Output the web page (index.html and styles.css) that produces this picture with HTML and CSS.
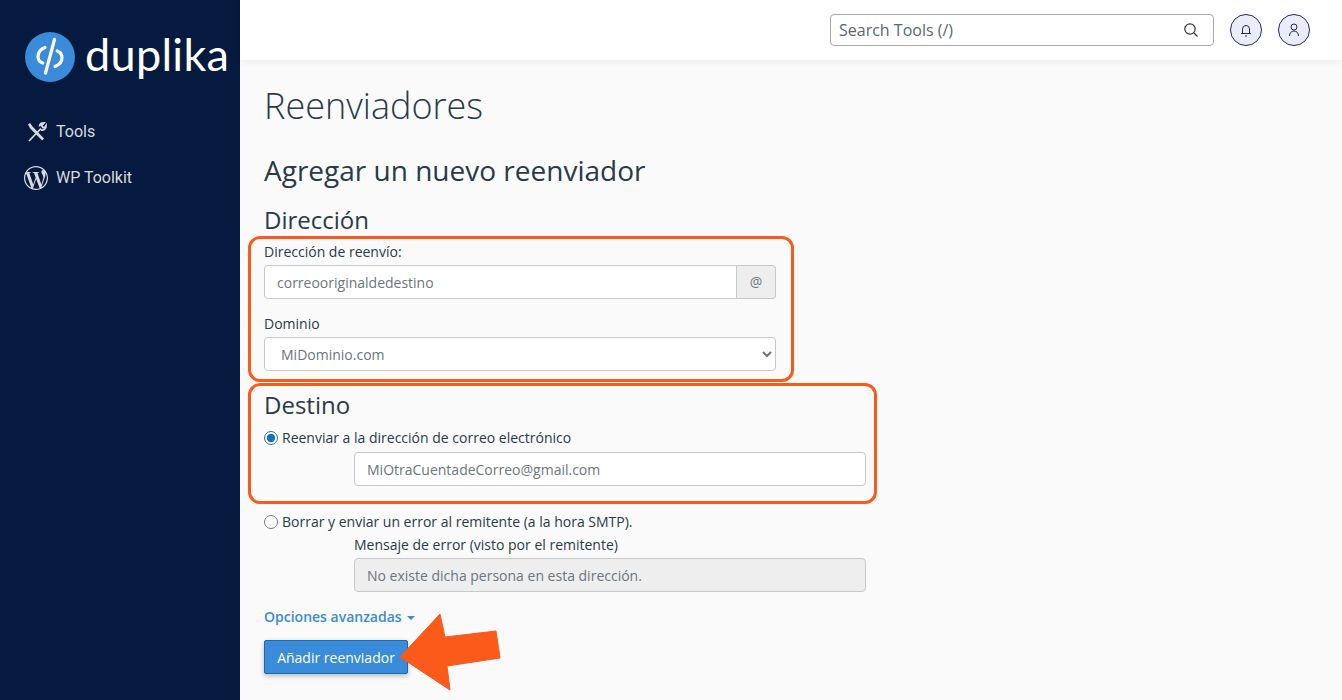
FILE: index.html
```html
<!DOCTYPE html>
<html lang="es">
<head>
    <meta charset="UTF-8">
    <meta name="viewport" content="width=device-width, initial-scale=1.0">
    <title>Reenviadores - duplika</title>
    <link rel="stylesheet" href="styles.css">
</head>
<body>

<div class="layout">
    <!-- Sidebar -->
    <aside class="sidebar">
        <div class="brand">
            <svg class="brand-mark" width="50" height="50" viewBox="0 0 50 50">
                <circle cx="25" cy="25" r="25" fill="#3a8bd9"/>
                <path d="M20 15.5c-4.5 1.8-7 5.2-7 9 0 3.2 1.8 5.6 4.8 6.6M30 34.5c4.500-1.800 7-5.200 7-9 0-3.200-1.800-5.600-4.800-6.600" fill="none" stroke="#fff" stroke-width="3.200" stroke-linecap="round"/>
                <path d="M29.500 7.500 20.500 41" fill="none" stroke="#fff" stroke-width="3.200" stroke-linecap="round"/>
            </svg>
            <span class="brand-name">duplika</span>
        </div>
        <nav class="side-nav">
            <a class="side-link" href="#">
                <svg class="side-icon" width="24" height="24" viewBox="0 0 24 24" fill="none" stroke="#d8dade" stroke-width="1.800">
                    <path d="M5 21 17 8.500M15.500 6.500c.2-2 2-3.600 4.500-3.500l-2.300 2.500 1 1.800 2.300.2 1-1.800c.3 2.700-2.300 5-5 4.300"/>
                    <path d="M4 4.500 6 3l2.500 3.500 11.500 12-1.800 2-12-12L4 4.500Z" fill="#d8dade" stroke="none"/>
                </svg>
                <span>Tools</span>
            </a>
            <a class="side-link" href="#">
                <svg class="side-icon" width="24" height="24" viewBox="0 0 24 24" fill="#d8dade">
                    <path d="M21.469 6.825c.84 1.537 1.318 3.3 1.318 5.175 0 3.979-2.156 7.456-5.363 9.325l3.295-9.527c.615-1.54.82-2.771.82-3.864 0-.405-.026-.78-.07-1.11m-7.981.105c.647-.03 1.232-.105 1.232-.105.582-.075.514-.93-.067-.899 0 0-1.755.135-2.88.135-1.064 0-2.85-.15-2.85-.15-.585-.03-.661.855-.075.885 0 0 .54.061 1.125.09l1.68 4.605-2.37 7.08L5.354 6.9c.649-.03 1.234-.1 1.234-.1.585-.075.516-.93-.065-.896 0 0-1.746.138-2.874.138-.2 0-.438-.008-.69-.015C4.911 3.15 8.235 1.215 12 1.215c2.809 0 5.365 1.072 7.286 2.833-.046-.003-.091-.009-.141-.009-1.06 0-1.812.923-1.812 1.914 0 .89.513 1.643 1.06 2.531.411.72.89 1.643.89 2.977 0 .915-.354 1.994-.821 3.479l-1.075 3.585-3.9-11.61.001.014zM12 22.784c-1.059 0-2.081-.153-3.048-.437l3.237-9.406 3.315 9.087c.024.053.05.101.078.149-1.12.393-2.325.609-3.582.609M1.211 12c0-1.564.336-3.05.935-4.39L7.29 21.709C3.694 19.96 1.212 16.271 1.211 12M12 0C5.385 0 0 5.385 0 12s5.385 12 12 12 12-5.385 12-12S18.615 0 12 0"/>
                </svg>
                <span>WP Toolkit</span>
            </a>
        </nav>
    </aside>

    <div class="page">
        <!-- Top bar -->
        <header class="topbar">
            <div class="search">
                <span class="search-text">Search Tools (/)</span>
                <svg width="16" height="16" viewBox="0 0 16 16" fill="none" stroke="#333" stroke-width="1.200">
                    <circle cx="7" cy="7" r="5.200"/>
                    <path d="m11 11 3.500 3.500"/>
                </svg>
            </div>
            <button class="round-btn" type="button" aria-label="Notificaciones">
                <svg width="16" height="16" viewBox="0 0 16 16" fill="none" stroke="#1c2d4f" stroke-width="1">
                    <path d="M3 11.500h10M4.500 11.500V7a3.500 3.500 0 0 1 7 0v4.500"/>
                    <path d="M7 14h2"/>
                </svg>
            </button>
            <button class="round-btn" type="button" aria-label="Usuario">
                <svg width="16" height="16" viewBox="0 0 16 16" fill="none" stroke="#1c2d4f" stroke-width="1">
                    <circle cx="8" cy="5" r="3"/>
                    <path d="M3.500 14c0-3 1.800-5 4.500-5s4.500 2 4.500 5"/>
                </svg>
            </button>
        </header>

        <!-- Contenido -->
        <main class="content">
            <h1>Reenviadores</h1>
            <h2>Agregar un nuevo reenviador</h2>

            <form class="forward-form">
                <h3 class="title-address">Dirección</h3>
                <label class="field-label" for="fwdAddress">Dirección de reenvío:</label>
                <div class="input-group">
                    <input class="text-input" type="text" id="fwdAddress" value="correooriginaldedestino">
                    <span class="input-addon">@</span>
                </div>
                <label class="field-label domain-label" for="fwdDomain">Dominio</label>
                <select class="text-input domain-select" id="fwdDomain">
                    <option>MiDominio.com</option>
                </select>

                <h3 class="title-dest">Destino</h3>
                <label class="radio-row">
                    <input type="radio" name="dest" checked>
                    <span>Reenviar a la dirección de correo electrónico</span>
                </label>
                <div class="indented first-indent">
                    <input class="text-input" type="text" value="MiOtraCuentadeCorreo@gmail.com">
                </div>

                <label class="radio-row second-radio">
                    <input type="radio" name="dest">
                    <span>Borrar y enviar un error al remitente (a la hora SMTP).</span>
                </label>
                <div class="indented">
                    <label class="field-label" for="errMsg">Mensaje de error (visto por el remitente)</label>
                    <input class="text-input is-disabled" type="text" id="errMsg" value="No existe dicha persona en esta dirección." disabled>
                </div>

                <a class="advanced-link" href="#">Opciones avanzadas <span class="caret"></span></a>
                <button class="submit-btn" type="button">Añadir reenviador</button>

                <!-- Anotaciones encima del formulario -->
                <div class="mark mark-address"></div>
                <div class="mark mark-dest"></div>
                <svg class="mark-arrow" width="104" height="78" viewBox="0 0 104 78">
                    <path d="M1 44 41 1l5 23 51-6 4 27-53 8 3 24Z" fill="#fb5a1a" stroke="#fb5a1a" stroke-width="1" stroke-linejoin="round"/>
                </svg>
            </form>
        </main>
    </div>
</div>

</body>
</html>
```

FILE: styles.css
```css
* {
    box-sizing: border-box;
}
html, body {
    margin: 0;
    height: 100%;
}
body {
    font-family: "Open Sans", sans-serif;
    font-size: 14px;
    line-height: 20px;
    color: #293a4a;
    background-color: #fafafa;
    overflow: hidden;
}
.layout {
    display: flex;
    height: 700px;
}

/* sidebar */
.sidebar {
    width: 240px;
    flex-shrink: 0;
    background-color: #051a3e;
}
.brand {
    display: flex;
    align-items: center;
    gap: 10px;
    padding: 32px 0 0 25px;
    height: 82px;
}
.brand-mark {
    flex-shrink: 0;
}
.brand-name {
    font-family: "Lato", sans-serif;
    font-size: 45px;
    line-height: 50px;
    font-weight: 400;
    color: #fff;
    letter-spacing: 0.3px;
    position: relative;
    top: -3px;
}
.side-nav {
    padding-top: 27px;
}
.side-link {
    display: flex;
    align-items: center;
    gap: 8px;
    height: 46px;
    padding-left: 24px;
    font-family: "Roboto", sans-serif;
    font-size: 16px;
    color: #d8dade;
    text-decoration: none;
}

/* top bar */
.page {
    flex: 1;
    min-width: 0;
}
.topbar {
    display: flex;
    align-items: center;
    justify-content: flex-end;
    gap: 16px;
    height: 60px;
    padding-right: 32px;
    background: #fff;
    box-shadow: 0 2px 6px rgba(0,0,0,0.06);
}
.search {
    display: flex;
    align-items: center;
    justify-content: space-between;
    width: 384px;
    height: 32px;
    padding: 0 14px 0 8px;
    margin-right: 0;
    border: 1px solid #a9a9a9;
    border-radius: 4px;
}
.search-text {
    font-size: 16px;
    color: #5c6670;
}
.round-btn {
    display: flex;
    align-items: center;
    justify-content: center;
    width: 32px;
    height: 32px;
    padding: 0;
    border: 1px solid #1c2d4f;
    border-radius: 50%;
    background-color: #e9edfb;
}

/* content */
.content {
    padding: 24px 24px 0;
}
h1 {
    margin: 0;
    font-size: 36px;
    line-height: 43px;
    font-weight: 300;
}
h2 {
    margin: 25px 0 0;
    font-size: 28px;
    line-height: 36px;
    font-weight: 400;
}
h3 {
    margin: 0;
    font-size: 24px;
    line-height: 29px;
    font-weight: 400;
}
.forward-form {
    position: relative;
    width: 602px;
}
.title-address {
    margin-top: 17px;
}
.title-dest {
    margin-top: 19px;
}
.field-label {
    display: block;
    margin-bottom: 3px;
}
.title-address + .field-label {
    margin-top: 8px;
}
.domain-label {
    margin-top: 15px;
}
.text-input {
    display: block;
    width: 100%;
    height: 34px;
    padding: 0 12px;
    font-family: inherit;
    font-size: 14px;
    color: #6c757d;
    background-color: #fff;
    border: 1px solid #c6c8ca;
    border-radius: 4px;
}
.input-group {
    display: flex;
    width: 512px;
}
.input-group .text-input {
    border-radius: 4px 0 0 4px;
}
.input-addon {
    flex-shrink: 0;
    width: 39px;
    height: 34px;
    line-height: 32px;
    text-align: center;
    color: #6c757d;
    background-color: #eee;
    border: 1px solid #c6c8ca;
    border-left: 0;
    border-radius: 0 4px 4px 0;
}
.domain-select {
    width: 512px;
}
.radio-row {
    display: flex;
    align-items: center;
    gap: 4px;
    margin-top: 9px;
}
.radio-row input {
    margin: 0;
    width: 14px;
    height: 14px;
    accent-color: #1b6ec2;
}
.second-radio {
    margin-top: 26px;
}
.indented {
    margin-left: 90px;
    margin-top: 3px;
}
.first-indent {
    margin-top: 4px;
}
.is-disabled {
    background-color: #eee;
}
.advanced-link {
    display: block;
    margin-top: 15px;
    font-weight: 600;
    color: #3a8bd9;
    text-decoration: none;
}
.caret {
    display: inline-block;
    margin-left: 2px;
    vertical-align: middle;
    border-top: 4px solid #3a8bd9;
    border-left: 4px solid transparent;
    border-right: 4px solid transparent;
}
.submit-btn {
    display: block;
    margin-top: 13px;
    width: 144px;
    height: 34px;
    padding: 0;
    font-family: inherit;
    font-size: 14px;
    color: #fff;
    background-color: #3a8bd9;
    border: 1px solid #1b68b3;
    border-radius: 2px;
    box-shadow: 0 2px 5px rgba(0,0,0,0.25);
}

/* orange annotations */
.mark {
    position: absolute;
    border: 3px solid #fb5a1a;
    border-radius: 12px;
    pointer-events: none;
}
.mark-address {
    left: -16px;
    top: 31px;
    width: 546px;
    height: 146px;
}
.mark-dest {
    left: -16px;
    top: 178px;
    width: 629px;
    height: 121px;
}
.mark-arrow {
    position: absolute;
    left: 135px;
    top: 408px;
}
```
